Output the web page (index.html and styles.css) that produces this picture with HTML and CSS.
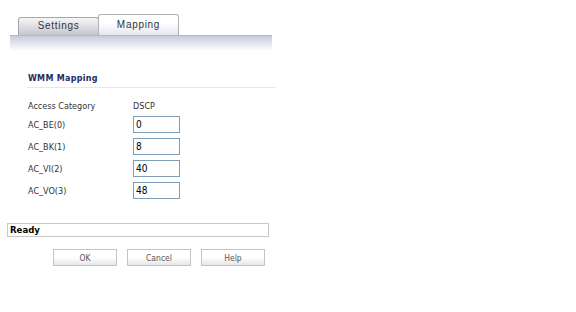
FILE: index.html
```html
<!DOCTYPE html>
<html>
<head>
<meta charset="utf-8">
<link rel="stylesheet" href="styles.css">
</head>
<body>
<div class="page">
  <div class="tabs">
    <div class="tab">Settings</div>
    <div class="tab active">Mapping</div>
  </div>
  <div class="band"></div>
  <div class="section">
    <div class="heading">WMM Mapping</div>
    <div class="grid">
      <div class="hdr-row"><span class="lbl">Access Category</span><span class="col2">DSCP</span></div>
      <div class="row"><span class="lbl">AC_BE(0)</span><input class="field" type="text" value="0"></div>
      <div class="row"><span class="lbl">AC_BK(1)</span><input class="field" type="text" value="8"></div>
      <div class="row"><span class="lbl">AC_VI(2)</span><input class="field" type="text" value="40"></div>
      <div class="row"><span class="lbl">AC_VO(3)</span><input class="field" type="text" value="48"></div>
    </div>
  </div>
  <div class="status">Ready</div>
  <div class="buttons">
    <button class="btn">OK</button>
    <button class="btn">Cancel</button>
    <button class="btn">Help</button>
  </div>
</div>
</body>
</html>
```
FILE: styles.css
```css
html, body {
  margin: 0;
  padding: 0;
  background: #ffffff;
}
.page {
  width: 576px;
  height: 312px;
  font-family: "DejaVu Sans Condensed", "DejaVu Sans", Verdana, sans-serif;
  font-size: 9px;
  color: #333333;
}
.tabs {
  display: flex;
  align-items: flex-end;
  padding-top: 14px;
  margin-left: 18px;
  height: 21px;
}
.tab {
  box-sizing: border-box;
  width: 81px;
  height: 18px;
  border: 1px solid #a4a6ae;
  border-bottom: none;
  border-radius: 3px 3px 0 0;
  background: linear-gradient(#f6f6f8, #c4c6d0);
  text-align: center;
  line-height: 15px;
  font-family: "Liberation Sans", Arial, sans-serif;
  font-size: 10px;
  letter-spacing: 0.7px;
  color: #333333;
}
.tab.active {
  width: 81px;
  height: 21px;
  margin-left: -1px;
  background: linear-gradient(#ffffff 40%, #e4e6f0);
  border-color: #b0b2ba;
  line-height: 19px;
}
.band {
  margin-left: 10px;
  width: 262px;
  height: 15px;
  border-top: 1px solid #b4b8c6;
  background: linear-gradient(#c8ccdc, #ffffff);
}
.section {
  margin-left: 27px;
  width: 249px;
  padding-top: 23px;
}
.heading {
  font-family: "DejaVu Sans", Verdana, sans-serif;
  font-weight: bold;
  font-size: 8px;
  letter-spacing: 0.3px;
  color: #1e2c5c;
  padding-left: 1px;
  padding-bottom: 3px;
  border-bottom: 1px solid #e8e8ec;
  line-height: 10px;
}
.grid {
  padding-left: 1px;
  padding-top: 12px;
}
.hdr-row {
  display: flex;
  height: 13px;
  line-height: 13px;
  margin-bottom: 3px;
}
.lbl {
  width: 105px;
  flex: none;
}
.row {
  display: flex;
  align-items: center;
  height: 17px;
  margin-bottom: 5px;
}
.field {
  box-sizing: border-box;
  width: 47px;
  height: 17px;
  margin: 0;
  padding: 0 2px;
  border: 1px solid #7f9db9;
  font-family: "DejaVu Sans Condensed", "DejaVu Sans", sans-serif;
  font-size: 10px;
  color: #000000;
  background: #ffffff;
}
.status {
  box-sizing: border-box;
  margin-left: 7px;
  margin-top: 24px;
  width: 262px;
  height: 14px;
  border: 1px solid #c8c8c8;
  padding-left: 2px;
  font-family: "DejaVu Sans Condensed", "DejaVu Sans", sans-serif;
  font-weight: bold;
  font-size: 9.5px;
  line-height: 12px;
  color: #000000;
}
.buttons {
  display: flex;
  gap: 10px;
  margin-left: 53px;
  margin-top: 12px;
}
.btn {
  box-sizing: border-box;
  width: 64px;
  height: 17px;
  margin: 0;
  padding: 0;
  border: 1px solid #c4c4c4;
  background: linear-gradient(#ffffff 50%, #e6e6e6);
  font-family: "DejaVu Sans Condensed", "DejaVu Sans", sans-serif;
  font-size: 8.5px;
  color: #555555;
}
```
